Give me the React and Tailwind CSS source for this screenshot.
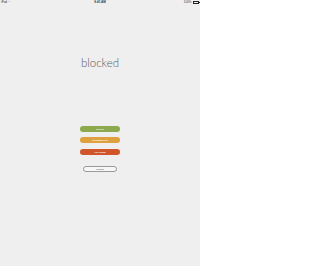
export default function App() {
  return (
    <div className="w-[200px] h-[266px] bg-[#efefef] flex flex-col items-center overflow-hidden" style={{ fontFamily: '"Liberation Sans", Arial, sans-serif' }}>
      <div className="w-full h-[5px] flex items-center justify-between px-[1px] text-[3px] leading-none text-[#333]">
        <div className="w-[30px] flex items-center gap-[1px]">
          <span>iPad</span>
          <span className="text-[2.5px]">⌔</span>
        </div>
        <div className="font-bold">9:41 AM</div>
        <div className="w-[30px] flex items-center justify-end gap-[1px]">
          <span>100%</span>
          <div className="flex items-center">
            <div className="w-[6px] h-[2.5px] border-[0.4px] border-[#222] p-[0.3px]">
              <div className="w-full h-full bg-[#222]" />
            </div>
            <div className="w-[0.5px] h-[1.2px] bg-[#222]" />
          </div>
        </div>
      </div>
      <div className="mt-[52px] text-[11.5px] leading-none font-light text-[#5a5a5a]" style={{ fontFamily: 'Lato, Roboto, "Liberation Sans", sans-serif' }}>
        blocked
      </div>
      <div className="mt-[57px] flex flex-col gap-[5.5px]">
        <div className="w-[40px] h-[6px] rounded-full bg-[#8caa4b] flex items-center justify-center text-white text-[2px] font-bold leading-none tracking-[0.05px]">NOVICE</div>
        <div className="w-[40px] h-[6px] rounded-full bg-[#dfa03e] flex items-center justify-center text-white text-[2px] font-bold leading-none tracking-[0.05px]">INTERMEDIATE</div>
        <div className="w-[40px] h-[6px] rounded-full bg-[#d0552b] flex items-center justify-center text-white text-[2px] font-bold leading-none tracking-[0.05px]">ADVANCED</div>
      </div>
      <div className="mt-[11.5px] w-[34px] h-[6px] rounded-full border-[0.5px] border-[#999] bg-[#f7f7f7] flex items-center justify-center text-[2.2px] leading-none text-[#444]">settings</div>
    </div>
  );
}
